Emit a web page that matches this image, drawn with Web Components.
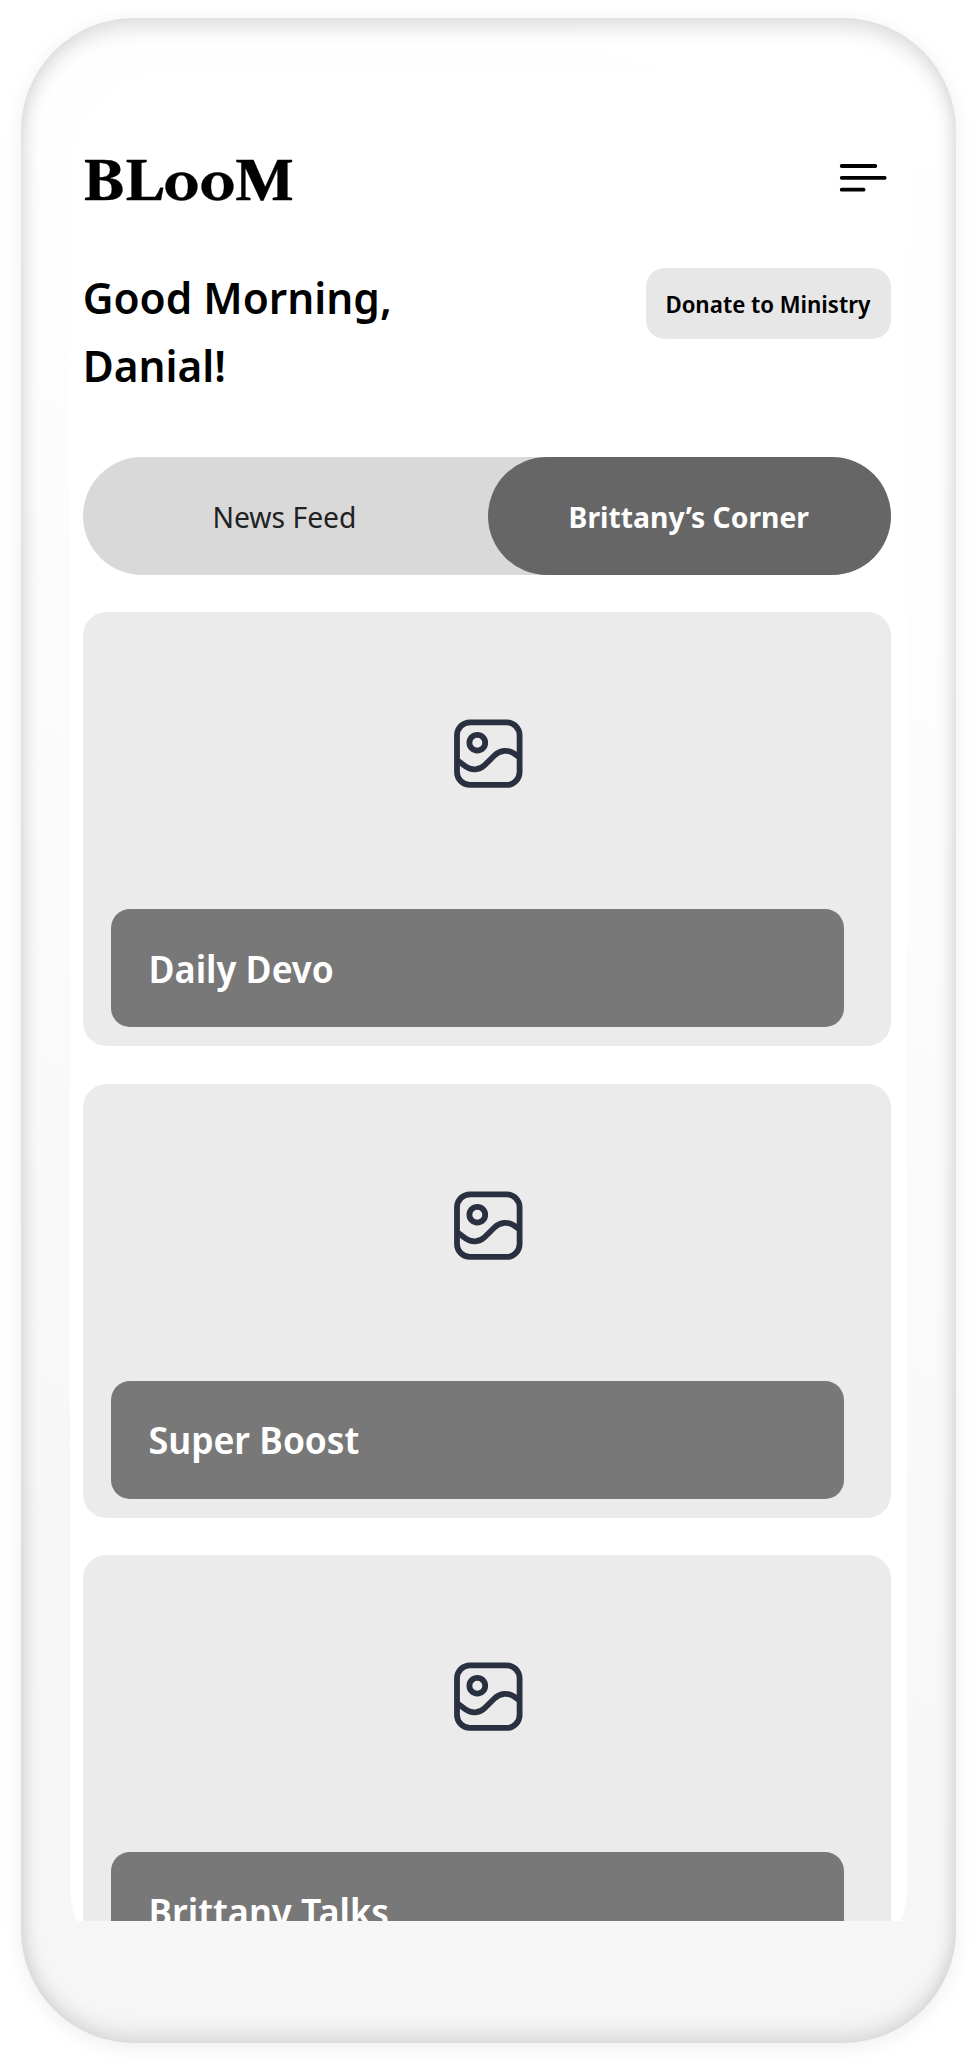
<!DOCTYPE html>
<html lang="en">
<head>
<meta charset="utf-8">
<title>BLooM</title>
<style>
html,body{margin:0;background:#fff}
body{width:973px;height:2063px;overflow:hidden;font-family:"Noto Sans","Open Sans",sans-serif;color:#000}
</style>
</head>
<body>
<phone-frame>
  <app-header>BLooM</app-header>
  <greeting-row><span>Good Morning,<br>Danial!</span><donate-button slot="action">Donate to Ministry</donate-button></greeting-row>
  <segment-control><span slot="first">News Feed</span><span slot="second">Brittany’s Corner</span></segment-control>
  <media-card>Daily Devo</media-card>
  <media-card>Super Boost</media-card>
  <media-card>Brittany Talks</media-card>
</phone-frame>
<script>
const define = (name, html) => customElements.define(name, class extends HTMLElement {
  constructor() {
    super();
    const t = document.createElement('template');
    t.innerHTML = html;
    this.attachShadow({mode: 'open'}).append(t.content.cloneNode(true));
  }
});

define('phone-frame', `<style>
:host{display:block;box-sizing:border-box;width:935px;height:2024.7px;margin:18px 0 0 21px;padding:55px 49px 0;border-radius:113px;
background:linear-gradient(200deg,#fff 0%,#fefefe 22%,#f6f6f6 85%);
box-shadow:0 4px 20px rgba(0,0,0,.07),inset 0 10px 20px rgba(0,0,0,.125),inset 0 -10px 20px rgba(0,0,0,.1)}
.view{height:1848px;overflow:hidden}
.screen{box-sizing:border-box;height:1912px;border-radius:98px;background:#fff;padding:0 15.6px 0 12.7px;display:flex;flex-direction:column;overflow:hidden}
</style><div class="view"><div class="screen"><slot></slot></div></div>`);

define('app-header', `<style>
:host{display:flex;justify-content:space-between;height:195px;flex:none;box-sizing:border-box;padding:74px 4px 0 0}
.brand{font:bold 56.6px/70px "Libre Caslon Text",Gelasio,"Liberation Serif",serif;white-space:nowrap;height:70px;transform-origin:0 54px;transform:translateY(-2px) scaleY(.906);-webkit-text-stroke:.4px #000}
svg{display:block;margin-top:15px;margin-right:.5px}
</style><span class="brand"><slot></slot></span>
<svg width="48" height="32" fill="none" stroke="#000" stroke-width="3.8" stroke-linecap="round"><path d="M2.7 4H36.3M2.7 15.8H45.7M2.7 27.7H24.6"/></svg>`);

define('greeting-row', `<style>
:host{display:flex;justify-content:space-between;align-items:flex-start;height:189px;flex:none}
.hi{font-size:42.4px;font-weight:600;line-height:68.4px;margin-top:-4px;white-space:nowrap}
</style><span class="hi"><slot></slot></span><slot name="action"></slot>`);

define('donate-button', `<style>
:host{display:flex;align-items:center;justify-content:center;box-sizing:border-box;width:245px;height:71px;padding-right:2px;border-radius:19px;background:#e7e7e7}
span{font-family:"Noto Sans Display","Noto Sans",sans-serif;font-size:23.57px;font-weight:600;line-height:32px;white-space:nowrap}
</style><span><slot></slot></span>`);

define('segment-control', `<style>
:host{display:grid;grid-template-columns:405px 1fr;height:117.8px;flex:none;margin-bottom:37.7px;border-radius:60px;background:#d9d9d9;font-size:28.3px}
div{display:flex;align-items:center;justify-content:center;box-sizing:border-box;padding:2px 1.5px 0 0;white-space:nowrap;color:#222}
.on{background:#666;border-radius:60px;color:#fff;font-weight:700}
</style><div><slot name="first"></slot></div><div class="on"><slot name="second"></slot></div>`);

define('media-card', `<style>
:host{display:flex;flex-direction:column;box-sizing:border-box;height:433.7px;flex:none;margin-bottom:37.7px;padding:107px 0 0 28.3px;border-radius:23.6px;background:#ebebeb}
svg{display:block;margin:0 0 121px 343.2px;flex:none}
.label{display:flex;align-items:center;box-sizing:border-box;width:733px;height:117.9px;padding-left:37.5px;border-radius:19px;background:#787878;color:#fff;font-family:"Noto Sans Display","Noto Sans",sans-serif;font-size:37.7px;font-weight:600;white-space:nowrap}
</style>
<svg width="70" height="69" viewBox="454 719 70 69" fill="none" stroke="#293040" stroke-width="5.8"><rect x="457" y="722.3" width="62.6" height="62.6" rx="13"/><circle cx="477.3" cy="742.7" r="7.9"/><path d="M457 760L465.3 766.3C471.3 770.8 479.5 770.3 484.8 765L494.4 755.5C499.9 750 508.3 749.3 514.6 753.8L519.6 757.5"/></svg>
<div class="label"><span><slot></slot></span></div>`);
</script>
</body>
</html>
